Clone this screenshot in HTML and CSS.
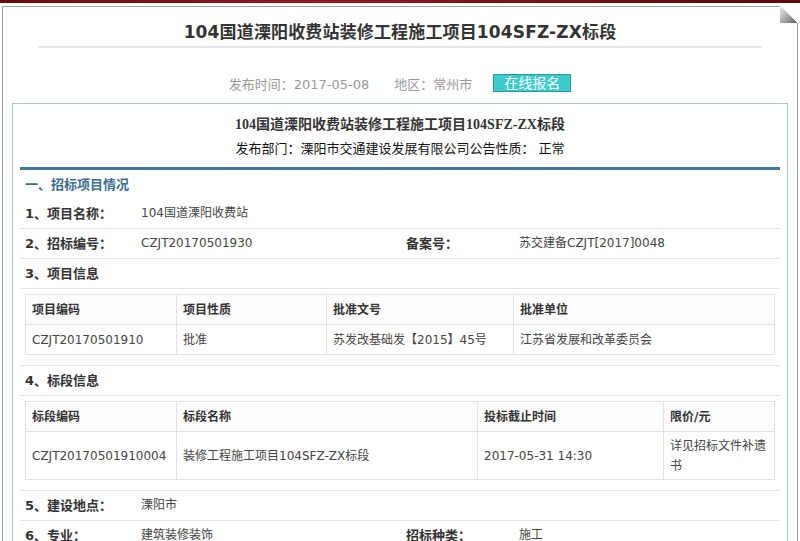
FILE: index.html
```html
<!DOCTYPE html>
<html lang="zh-CN">
<head>
    <meta charset="UTF-8">
    <meta name="viewport" content="width=device-width, initial-scale=1.0">
    <title>104国道溧阳收费站装修工程施工项目104SFZ-ZX标段</title>
    <link rel="stylesheet" href="styles.css">
</head>
<body>
    <div class="topbar"></div>
    <div class="page">
        <span class="fold"></span>
        <h1 class="page-title">104国道溧阳收费站装修工程施工项目104SFZ-ZX标段</h1>
        <div class="title-line"></div>
        <div class="meta">
            <span class="meta-item">发布时间：2017-05-08</span>
            <span class="meta-item meta-area">地区：常州市</span>
            <a class="signup" href="#">在线报名</a>
        </div>

        <div class="notice">
            <h2 class="notice-title">104国道溧阳收费站装修工程施工项目104SFZ-ZX标段</h2>
            <p class="notice-dept">发布部门：溧阳市交通建设发展有限公司公告性质： 正常</p>

            <div class="section-head">一、招标项目情况</div>

            <div class="row">
                <span class="label">1、项目名称：</span>
                <span class="value">104国道溧阳收费站</span>
            </div>
            <div class="row">
                <span class="label">2、招标编号：</span>
                <span class="value">CZJT20170501930</span>
                <span class="label">备案号：</span>
                <span class="value">苏交建备CZJT[2017]0048</span>
            </div>
            <div class="row">
                <span class="label">3、项目信息</span>
            </div>
            <div class="table-wrap">
                <table class="info-table">
                    <colgroup>
                        <col style="width: 151px">
                        <col style="width: 150px">
                        <col style="width: 187px">
                        <col>
                    </colgroup>
                    <tr>
                        <th>项目编码</th>
                        <th>项目性质</th>
                        <th>批准文号</th>
                        <th>批准单位</th>
                    </tr>
                    <tr>
                        <td>CZJT20170501910</td>
                        <td>批准</td>
                        <td>苏发改基础发【2015】45号</td>
                        <td>江苏省发展和改革委员会</td>
                    </tr>
                </table>
            </div>
            <div class="row">
                <span class="label">4、标段信息</span>
            </div>
            <div class="table-wrap">
                <table class="info-table">
                    <colgroup>
                        <col style="width: 151px">
                        <col style="width: 301px">
                        <col style="width: 186px">
                        <col>
                    </colgroup>
                    <tr>
                        <th>标段编码</th>
                        <th>标段名称</th>
                        <th>投标截止时间</th>
                        <th>限价/元</th>
                    </tr>
                    <tr class="tall">
                        <td>CZJT20170501910004</td>
                        <td>装修工程施工项目104SFZ-ZX标段</td>
                        <td>2017-05-31 14:30</td>
                        <td>详见招标文件补遗书</td>
                    </tr>
                </table>
            </div>
            <div class="row">
                <span class="label">5、建设地点：</span>
                <span class="value">溧阳市</span>
            </div>
            <div class="row">
                <span class="label">6、专业：</span>
                <span class="value">建筑装修装饰</span>
                <span class="label">招标种类：</span>
                <span class="value">施工</span>
            </div>
        </div>
    </div>
</body>
</html>
```

FILE: styles.css
```css
body {
    margin: 0;
    padding: 0;
    background: #ffffff;
    color: #333333;
    font-family: "DejaVu Sans", "Noto Sans CJK SC", sans-serif;
    font-size: 12px;
    overflow: hidden;
}

.topbar {
    height: 3px;
    background: linear-gradient(90deg, #6a0c0c, #8e1b1b 40%, #741212 70%, #5c0a0a);
}

.page {
    position: relative;
    margin: 3px 2px 0 2px;
    border: 1px solid #a0a0a0;
    border-bottom: none;
    background: #ffffff;
}

/* folded corner, top right */
.fold {
    position: absolute;
    top: -1px;
    right: -1px;
    width: 18px;
    height: 17px;
    background:
        linear-gradient(to bottom left, #ffffff 50%, transparent 50%),
        linear-gradient(135deg, #f2f2f2, #8a8a8a 70%, #555555);
}

.page-title {
    margin: 0;
    padding-top: 13px;
    line-height: 24px;
    font-size: 17px;
    font-weight: 700;
    letter-spacing: 0.15px;
    text-align: center;
    color: #333333;
}

.title-line {
    margin: 2px 35px 0;
    border-top: 2px solid #e8e8e8;
}

.meta {
    display: flex;
    justify-content: center;
    align-items: center;
    margin-top: 26px;
    height: 18px;
    font-size: 13px;
    color: #999999;
}

.meta-item {
    margin-right: 25px;
}

.meta-area {
    margin-right: 21px;
}

.signup {
    display: inline-block;
    height: 16px;
    line-height: 16px;
    padding: 0 10px;
    border: 1px solid #2a9c9c;
    background: #3ccaca;
    color: #ffffff;
    font-size: 14px;
    text-decoration: none;
}

.notice {
    margin: 11px 9px 0;
    padding: 0 7px;
    border: 1px solid #a9c3d5;
    border-bottom: none;
}

.notice-title {
    margin: 0;
    padding-top: 11px;
    line-height: 20px;
    font-family: "Liberation Serif", "Noto Sans CJK SC", serif;
    font-size: 14px;
    font-weight: 700;
    text-align: center;
    color: #333333;
}

.notice-dept {
    margin: 5px 0 0;
    line-height: 18px;
    font-size: 13px;
    text-align: center;
    color: #111111;
}

.section-head {
    margin-top: 9px;
    border-top: 3px solid #3d7a9c;
    height: 29px;
    line-height: 29px;
    padding-left: 5px;
    font-size: 13px;
    font-weight: 700;
    color: #3a6d8e;
}

.row {
    display: grid;
    grid-template-columns: 116px 265px 113px 1fr;
    height: 29px;
    line-height: 29px;
    border-bottom: 1px solid #e4e4e4;
}

.row span {
    padding-left: 5px;
    white-space: nowrap;
}

.label {
    font-size: 13px;
    font-weight: 700;
    color: #333333;
}

.value {
    color: #444444;
}

.table-wrap {
    padding: 5px 5px 10px;
    border-bottom: 1px solid #e4e4e4;
}

.info-table {
    width: 100%;
    table-layout: fixed;
    border-collapse: collapse;
    border: 1px solid #e2e2e2;
}

.info-table th,
.info-table td {
    height: 29px;
    padding: 0 6px;
    border: 1px solid #e2e2e2;
    text-align: left;
    vertical-align: middle;
    line-height: 20px;
    color: #333333;
}

.info-table th {
    font-weight: 700;
    background: #fdfdfd;
}

.info-table td {
    color: #444444;
}

.info-table .tall td {
    height: 47px;
}
```
